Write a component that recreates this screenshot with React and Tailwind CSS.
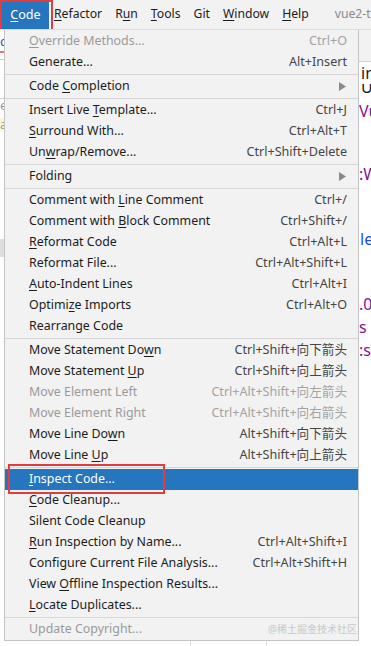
import React from 'react';

const items = [
  { l: 'Override Methods...', u: 0, s: 'Ctrl+O', d: true },
  { l: 'Generate...', s: 'Alt+Insert', sep: true },
  { l: 'Code Completion', u: 5, sub: true, sep: true },
  { l: 'Insert Live Template...', u: 12, s: 'Ctrl+J' },
  { l: 'Surround With...', u: 0, s: 'Ctrl+Alt+T' },
  { l: 'Unwrap/Remove...', u: 2, s: 'Ctrl+Shift+Delete', sep: true },
  { l: 'Folding', sub: true, sep: true },
  { l: 'Comment with Line Comment', u: 13, s: 'Ctrl+/' },
  { l: 'Comment with Block Comment', u: 13, s: 'Ctrl+Shift+/' },
  { l: 'Reformat Code', u: 0, s: 'Ctrl+Alt+L' },
  { l: 'Reformat File...', s: 'Ctrl+Alt+Shift+L' },
  { l: 'Auto-Indent Lines', u: 0, s: 'Ctrl+Alt+I' },
  { l: 'Optimize Imports', u: 6, s: 'Ctrl+Alt+O' },
  { l: 'Rearrange Code', sep: true },
  { l: 'Move Statement Down', u: 17, s: 'Ctrl+Shift+向下箭头' },
  { l: 'Move Statement Up', u: 15, s: 'Ctrl+Shift+向上箭头' },
  { l: 'Move Element Left', s: 'Ctrl+Alt+Shift+向左箭头', d: true },
  { l: 'Move Element Right', s: 'Ctrl+Alt+Shift+向右箭头', d: true },
  { l: 'Move Line Down', u: 12, s: 'Alt+Shift+向下箭头' },
  { l: 'Move Line Up', u: 10, s: 'Alt+Shift+向上箭头', sep: true },
  { l: 'Inspect Code...', u: 0, active: true },
  { l: 'Code Cleanup...', u: 0 },
  { l: 'Silent Code Cleanup' },
  { l: 'Run Inspection by Name...', u: 0, s: 'Ctrl+Alt+Shift+I' },
  { l: 'Configure Current File Analysis...', s: 'Ctrl+Alt+Shift+H' },
  { l: 'View Offline Inspection Results...', u: 5 },
  { l: 'Locate Duplicates...', u: 0, sep: true },
  { l: 'Update Copyright...', d: true, mark: true },
];

const Mn = ({ text, idx }) => {
  if (idx === undefined) return <span>{text}</span>;
  return (
    <span>
      {text.slice(0, idx)}
      <span className="underline underline-offset-[2px]">{text[idx]}</span>
      {text.slice(idx + 1)}
    </span>
  );
};

const Row = ({ it }) => {
  const label = it.active ? 'text-white' : it.d ? 'text-[#9a9a9a]' : 'text-[#1c1c1c]';
  const sc = it.active ? 'text-white' : it.d ? 'text-[#a3a3a3]' : 'text-[#454545]';
  return (
    <>
      <div className={`relative flex h-[21px] items-center pl-[24px] pr-[11px] ${it.active ? 'bg-[#2675bf]' : ''}`}>
        <span className={`flex-1 text-[12.4px] ${label}`}><Mn text={it.l} idx={it.u} /></span>
        {it.s && <span className={`text-[12.6px] ${sc}`}>{it.s}</span>}
        {it.sub && (
          <svg width="7" height="9" viewBox="0 0 7 9" className="mr-[1px]">
            <path d="M0 0 L7 4.5 L0 9 Z" fill="#8a8a8a" />
          </svg>
        )}
        {it.mark && <span className="-mr-[10px] text-[10px] text-[#c9c9c9]">@稀土掘金技术社区</span>}
        {it.active && (
          <div className="absolute left-[3px] top-[-5px] h-[30px] w-[157px] border-2 border-[#e23c3c]" />
        )}
      </div>
      {it.sep && <div className="my-[1px] h-px bg-[#d6d6d6]" />}
    </>
  );
};

export default function App() {
  return (
    <div
      className="h-[646px] w-[371px] overflow-hidden bg-white text-[13px]"
      style={{ fontFamily: '"Noto Sans", "Noto Sans CJK SC", sans-serif' }}
    >
      <div className="flex h-[30px] items-center overflow-hidden whitespace-nowrap border-b border-[#dcdcdc] bg-[#f2f2f2] text-[12.2px] text-[#1c1c1c]">
        <div className="h-[31px] w-[53px] shrink-0 self-start border-2 border-[#e23c3c] pr-[2px]">
          <div className="flex h-full items-center justify-center bg-[#2675bf] text-[12.6px] text-white">
            <Mn text="Code" idx={0} />
          </div>
        </div>
        <div className="ml-[1px] flex shrink-0 gap-[13px]">
          <Mn text="Refactor" idx={0} />
          <Mn text="Run" idx={1} />
          <Mn text="Tools" idx={0} />
          <span>Git</span>
          <Mn text="Window" idx={0} />
          <Mn text="Help" idx={0} />
        </div>
        <span className="ml-[26px] shrink-0 text-[#8a8a8a]">vue2-test</span>
      </div>

      <div className="flex">
        <div className="flex w-[4px] flex-col overflow-hidden text-[13px] leading-none">
          <span className="mt-[5px] text-[#2156c9]">d</span>
          <div className="mt-[3px] h-[2px] bg-[#e57373]" />
          <div className="mt-[6px] h-px bg-[#cfcfcf]" />
          <div className="mt-[38px] h-px bg-[#cfcfcf]" />
          <span className="mt-[0px] text-[#999]">e</span>
          <span className="mt-[6px] bg-[#fbf6d8] text-[#999]">a</span>
          <div className="mt-[108px] h-[18px] bg-[#dedede]" />
        </div>

        <div className="w-[355px] shrink-0 border border-t-0 border-[#c4c4c4] bg-[#f2f2f2] pt-[1px] whitespace-nowrap">
          {items.map((it) => (
            <Row key={it.l} it={it} />
          ))}
        </div>

        <div className="flex flex-1 flex-col overflow-hidden whitespace-nowrap text-[16px] leading-[21px]">
          <div className="h-[31px] bg-[#f2f2f2]" />
          <div className="h-px bg-[#d0d0d0]" />
          <span className="mt-[1px] pl-[2px] text-[#1c1c1c]">im</span>
          <div className="flex h-[9px] items-end overflow-hidden pl-[2px] text-[#1c1c1c]">
            <span className="leading-[12px]">U</span>
          </div>
          <span className="mt-[8px] text-[#871094]">Vu</span>
          <span className="mt-[42px] text-[#871094]">:W</span>
          <span className="mt-[44px] pl-[1px] text-[#1750eb]">le</span>
          <span className="mt-[44px] text-[#871094]">.0</span>
          <span className="mt-[2px] text-[#871094]">s</span>
          <span className="mt-[2px] text-[#871094]">:s</span>
        </div>
      </div>

      <div className="flex h-[8px]">
        <div className="ml-[190px] w-px bg-[#dcdcdc]" />
        <div className="ml-[75px] w-px bg-[#dcdcdc]" />
      </div>
    </div>
  );
}
